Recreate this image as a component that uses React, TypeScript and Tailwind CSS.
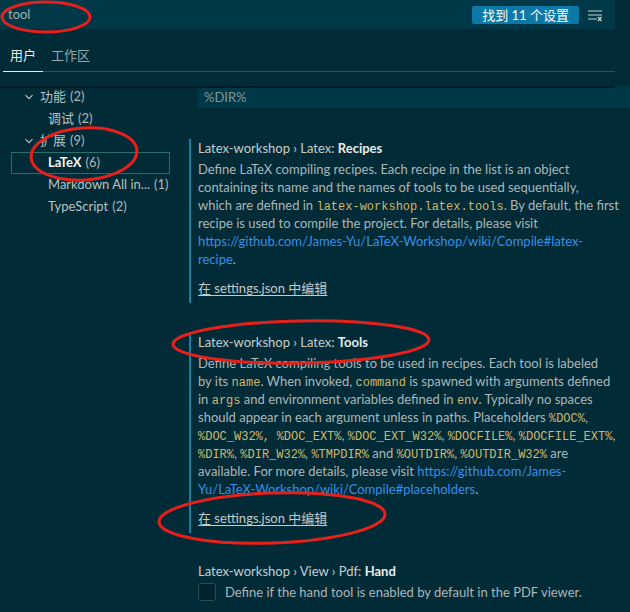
const code = 'font-["Liberation_Mono",monospace] text-[12px] leading-none text-[#d3b76c]';

const Code = ({ children }: { children: React.ReactNode }) => <span className={code}>{children}</span>;

const Chevron = () => (
  <svg width="10" height="10" viewBox="0 0 10 10" className="mr-[6px]">
    <path d="M1.5 3.2 L5 6.7 L8.5 3.2" fill="none" stroke="#b8c2c2" strokeWidth="1.2" />
  </svg>
);

const tree = [
  { label: '功能', count: 2, pad: 'pl-[24px]', chevron: true },
  { label: '调试', count: 2, pad: 'pl-[48px]' },
  { label: '扩展', count: 9, pad: 'pl-[24px]', chevron: true },
  { label: 'LaTeX', count: 6, pad: 'pl-[48px]', selected: true },
  { label: 'Markdown All in...', count: 1, pad: 'pl-[48px]' },
  { label: 'TypeScript', count: 2, pad: 'pl-[48px]' },
];

const Title = ({ path, name }: { path: string; name: string }) => (
  <div className="h-[18px] leading-[18px] text-[#c7cece] whitespace-nowrap">
    {path}
    <span className="font-bold text-[#e8ecec]">{name}</span>
  </div>
);

const EditLink = () => (
  <div className="mt-[11px] h-[18px] leading-[18px] text-[#c2caca]">
    <span className="underline underline-offset-2">在 settings.json 中编辑</span>
  </div>
);

const Line = ({ children }: { children: React.ReactNode }) => (
  <div className="h-[18px] leading-[18px] whitespace-nowrap">{children}</div>
);

const Link = ({ children }: { children: React.ReactNode }) => <span className="text-[#3b8fe6]">{children}</span>;

export default function App() {
  return (
    <div className="relative w-[630px] h-[612px] overflow-hidden bg-[#002b37] text-[13px] text-[#adb7b8] font-['Lato','Noto_Sans_CJK_SC',sans-serif]">
      {/* search */}
      <div className="flex h-[29px] w-[615px] items-center justify-between bg-[#003847] pl-[8px] pr-[12px]">
        <span className="text-[#9fb0b2]">tool</span>
        <div className="flex items-center gap-[8px]">
          <span className="rounded-[2px] bg-[#0c79a6] px-[10px] leading-[18px] text-white">找到 11 个设置</span>
          <svg width="16" height="16" viewBox="0 0 16 16">
            <path d="M1 4h14M1 8h14M1 12h9" stroke="#c8d0d0" strokeWidth="1.2" />
            <path d="M11 10l3.5 4M14.5 10l-3.5 4" stroke="#c8d0d0" strokeWidth="1.3" />
          </svg>
        </div>
      </div>

      {/* tabs */}
      <div className="h-[57px] w-[615px] pl-[3px] pt-[14px]">
        <div className="flex border-b border-[#34505a] leading-[18px]">
          <div className="-mb-px border-b border-[#e6eaea] px-[7px] pt-[3px] pb-[7px] text-[#e6eaea]">用户</div>
          <div className="px-[8px] pt-[3px] pb-[7px] text-[#9aa8aa]">工作区</div>
        </div>
      </div>

      {/* body */}
      <div className="relative flex">
        <div className="absolute left-0 top-0 h-[2px] w-[615px] bg-[#001d26]" />

        <div className="w-[185px] shrink-0">
          {tree.map((t) =>
            t.selected ? (
              <div key={t.label} className="ml-[11px] flex h-[22px] w-[159px] items-center border border-[#24706f] pl-[36px]">
                <span className="font-bold text-[#f2f4f4]">{t.label}</span>
                <span className="ml-[4px]">({t.count})</span>
              </div>
            ) : (
              <div key={t.label} className={`flex h-[22px] items-center ${t.pad}`}>
                {t.chevron && <Chevron />}
                <span className="text-[#b8c2c2]">{t.label}</span>
                <span className="ml-[4px]">({t.count})</span>
              </div>
            )
          )}
        </div>

        <div className="flex-1">
          <div className="ml-[13px] h-[22px] bg-[#003847] pl-[6px] leading-[22px] text-[#869698]">%DIR%</div>

          <div className="ml-[4px] mt-[31px] border-l-2 border-[#1282a8] pl-[7px] pb-[6px]">
            <Title path="Latex-workshop › Latex: " name="Recipes" />
            <div className="mt-[3px]">
              <Line>Define LaTeX compiling recipes. Each recipe in the list is an object</Line>
              <Line>containing its name and the names of tools to be used sequentially,</Line>
              <Line>
                which are defined in <Code>latex-workshop.latex.tools</Code>. By default, the first
              </Line>
              <Line>recipe is used to compile the project. For details, please visit</Line>
              <Line>
                <Link>https://github.com/James-Yu/LaTeX-Workshop/wiki/Compile#latex-</Link>
              </Line>
              <Line>
                <Link>recipe</Link>.
              </Line>
            </div>
            <EditLink />
          </div>

          <div className="ml-[4px] mt-[30px] border-l-2 border-[#1282a8] pl-[7px] pb-[6px]">
            <Title path="Latex-workshop › Latex: " name="Tools" />
            <div className="mt-[3px]">
              <Line>Define LaTeX compiling tools to be used in recipes. Each tool is labeled</Line>
              <Line>
                by its <Code>name</Code>. When invoked, <Code>command</Code> is spawned with arguments defined
              </Line>
              <Line>
                in <Code>args</Code> and environment variables defined in <Code>env</Code>. Typically no spaces
              </Line>
              <Line>
                should appear in each argument unless in paths. Placeholders <Code>%DOC%</Code>,
              </Line>
              <Line>
                <Code>%DOC_W32%,</Code>
                {'\u00a0 '}
                <Code>%DOC_EXT%</Code>, <Code>%DOC_EXT_W32%</Code>, <Code>%DOCFILE%</Code>, <Code>%DOCFILE_EXT%</Code>,
              </Line>
              <Line>
                <Code>%DIR%</Code>, <Code>%DIR_W32%</Code>, <Code>%TMPDIR%</Code> and <Code>%OUTDIR%</Code>,{' '}
                <Code>%OUTDIR_W32%</Code> are
              </Line>
              <Line>
                available. For more details, please visit <Link>https://github.com/James-</Link>
              </Line>
              <Line>
                <Link>Yu/LaTeX-Workshop/wiki/Compile#placeholders</Link>.
              </Line>
            </div>
            <EditLink />
          </div>

          <div className="ml-[4px] mt-[29px] border-l-2 border-transparent pl-[7px]">
            <Title path="Latex-workshop › View › Pdf: " name="Hand" />
            <div className="mt-[3px] flex items-center gap-[9px]">
              <div className="h-[18px] w-[18px] rounded-[3px] border border-[#1d5555] bg-[#00222c]" />
              <span className="leading-[18px]">Define if the hand tool is enabled by default in the PDF viewer.</span>
            </div>
          </div>
        </div>
      </div>

      {/* annotation marks */}
      <svg className="pointer-events-none absolute left-0 top-0" width="630" height="612">
        <g fill="none" stroke="#e8201c" strokeWidth="3">
          <ellipse cx="46" cy="17" rx="44" ry="15" />
          <ellipse cx="84" cy="154" rx="53" ry="26" transform="rotate(-4 84 154)" />
          <ellipse cx="301" cy="342" rx="128" ry="21" transform="rotate(-1 301 342)" />
          <ellipse cx="272" cy="518" rx="113" ry="25" transform="rotate(-2 272 518)" />
        </g>
      </svg>
    </div>
  );
}
